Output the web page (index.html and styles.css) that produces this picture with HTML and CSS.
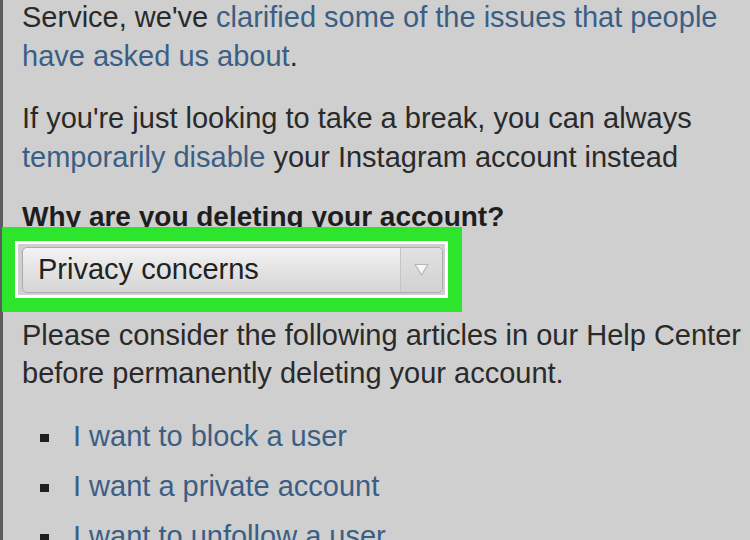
FILE: index.html
```html
<!DOCTYPE html>
<html lang="en">

<head>
  <meta charset="UTF-8" />
  <meta name="viewport" content="width=device-width,initial-scale=1" />
  <title>Delete Your Account</title>
  <link rel="stylesheet" href="styles.css">
</head>

<body>
  <div class="page">
    <p class="intro">Service, we've <a href="#">clarified some of the issues that people<br>have asked us about</a>.</p>
    <p>If you're just looking to take a break, you can always<br><a href="#">temporarily disable</a> your Instagram account instead</p>
    <h2>Why are you deleting your account?</h2>
    <div class="reason">
      <div class="select">
        <span class="select-value">Privacy concerns</span>
        <span class="select-arrow">
          <svg width="15" height="13" viewBox="0 0 15 13"><path d="M1 1.5h13L7.5 12z" fill="#f6f6f6" stroke="#b5b5b5" stroke-width="1.2" stroke-linejoin="round" /></svg>
        </span>
      </div>
      <div class="highlight"></div>
    </div>
    <p>Please consider the following articles in our Help Center<br>before permanently deleting your account.</p>
    <ul class="articles">
      <li><a href="#">I want to block a user</a></li>
      <li><a href="#">I want a private account</a></li>
      <li><a href="#">I want to unfollow a user</a></li>
    </ul>
  </div>
</body>

</html>
```

FILE: styles.css
```css
* {
  box-sizing: border-box;
  margin: 0;
  padding: 0;
}

body {
  font-family: "Liberation Sans", Arial, sans-serif;
  font-size: 29px;
  line-height: 38.5px;
  color: #2a2a2a;
  background: #cfcfcf;
  overflow: hidden;
}

.page {
  border-left: 3px solid #5c5c5c;
  padding-left: 19px;
  min-height: 100vh;
}

a {
  color: #3b5e85;
  text-decoration: none;
}

p {
  margin-top: 24px;
  white-space: nowrap;
}

p.intro {
  margin-top: -2px;
}

h2 {
  font-size: 28px;
  font-weight: bold;
  color: #1e1e1e;
  margin-top: 22px;
}

.reason {
  position: relative;
  margin-top: 10px;
  width: 421px;
}

.select {
  display: flex;
  align-items: center;
  height: 46px;
  border: 1px solid #ababab;
  border-radius: 5px;
  background: linear-gradient(#f3f3f3, #e2e2e2 55%, #d6d6d6);
  overflow: hidden;
}

.select-value {
  flex: 1;
  padding-left: 15px;
  color: #222;
}

.select-arrow {
  width: 42px;
  height: 100%;
  display: flex;
  align-items: center;
  justify-content: center;
  border-left: 1px solid #c4c4c4;
  background: linear-gradient(#e2e2e2, #d2d2d2);
}

/* screenshot annotation box */
.highlight {
  position: absolute;
  top: -20px;
  left: -20px;
  right: -19px;
  bottom: -19px;
  border: 14px solid #2de52d;
  border-left-width: 13px;
}

.highlight::after {
  content: "";
  position: absolute;
  inset: 0;
  border: 3px solid #fff;
  filter: blur(0.6px);
}

.reason+p {
  margin-top: 23px;
}

.articles {
  list-style: none;
  margin-top: 18px;
  line-height: 50px;
}

.articles li {
  display: flex;
  align-items: baseline;
}

.articles li::before {
  content: "";
  width: 9px;
  height: 8px;
  margin: 0 24px 0 18px;
  background: #1f1f1f;
  align-self: center;
  position: relative;
  top: 2px;
}
```
